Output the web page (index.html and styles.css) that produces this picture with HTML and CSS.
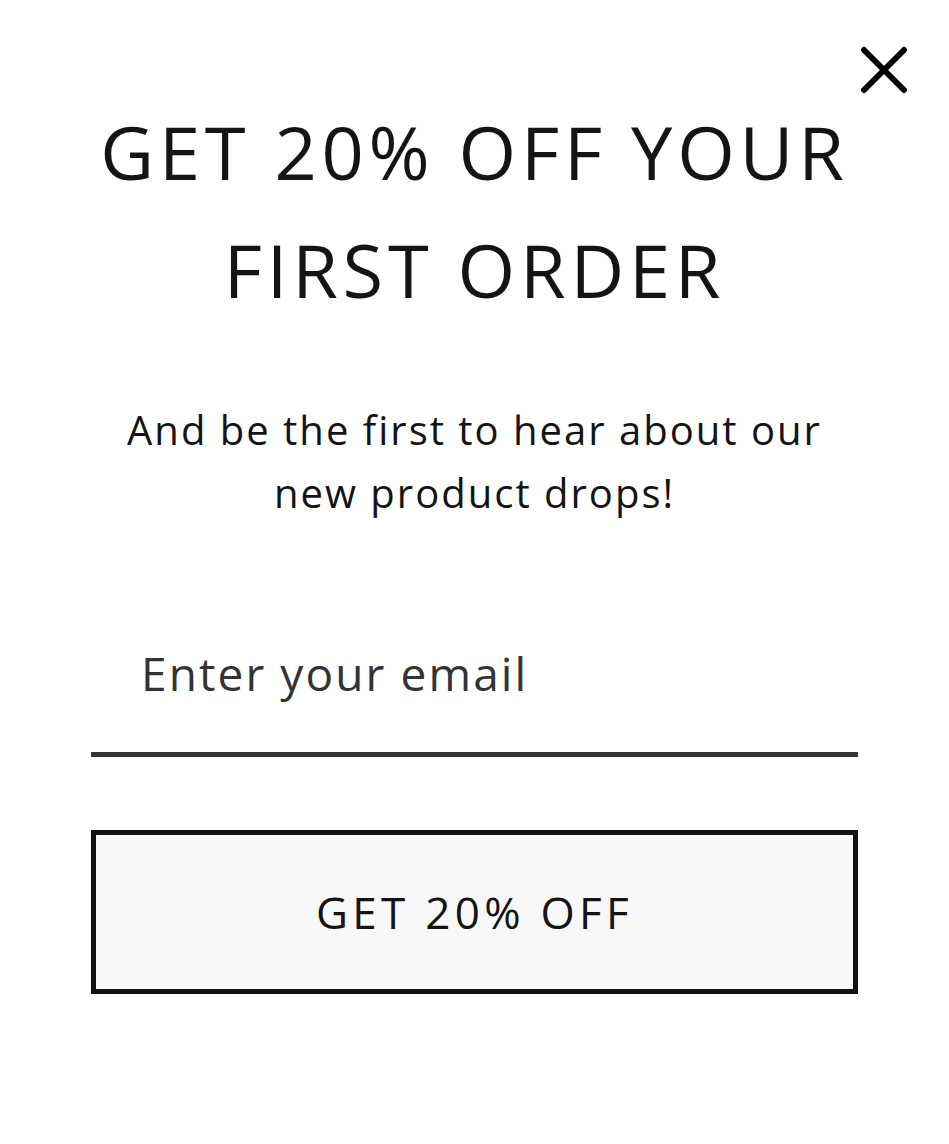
FILE: index.html
```html
<!DOCTYPE html>
<html lang="en">
<head>
<meta charset="utf-8">
<title>Get 20% off</title>
<link rel="stylesheet" href="styles.css">
</head>
<body>
<div class="popup">
  <button class="close" aria-label="Close">
    <svg viewBox="0 0 48 48" width="48" height="48"><path d="M4 4 L44 44 M44 4 L4 44" stroke="#000" stroke-width="6" stroke-linecap="round" fill="none"/></svg>
  </button>
  <h1 class="title">GET 20% OFF YOUR FIRST ORDER</h1>
  <p class="sub">And be the first to hear about our new product drops!</p>
  <div class="field">
    <input class="email" type="email" placeholder="Enter your email">
  </div>
  <button class="cta">GET 20% OFF</button>
</div>
</body>
</html>
```

FILE: styles.css
```css
html, body {
  margin: 0;
  padding: 0;
  background: #fff;
}
body {
  font-family: "Open Sans", "Liberation Sans", sans-serif;
  color: #141414;
}
.popup {
  position: relative;
  width: 767px;
  margin: 0 auto;
  padding-top: 93px;
}
.close {
  position: absolute;
  top: 46px;
  right: -50px;
  width: 48px;
  height: 48px;
  padding: 0;
  border: 0;
  background: none;
  display: flex;
}
.title {
  margin: 0;
  font-weight: 400;
  font-size: 74px;
  line-height: 118px;
  letter-spacing: 4.8px;
  text-align: center;
}
.sub {
  margin: 69px auto 0;
  max-width: 730px;
  font-size: 40px;
  line-height: 63px;
  letter-spacing: 2px;
  text-align: center;
}
.field {
  margin-top: 118px;
  border-bottom: 5px solid #333;
}
.email {
  display: block;
  width: 100%;
  box-sizing: border-box;
  border: 0;
  outline: none;
  background: transparent;
  padding: 0 0 48px 50px;
  font-family: inherit;
  font-size: 46px;
  letter-spacing: 2.1px;
  color: #333;
}
.email::placeholder {
  color: #333;
}
.cta {
  display: block;
  width: 100%;
  height: 164px;
  margin-top: 73px;
  box-sizing: border-box;
  border: 5px solid #111;
  background: #f8f8f8;
  font-family: inherit;
  font-size: 44px;
  letter-spacing: 4.3px;
  color: #141414;
}
```
